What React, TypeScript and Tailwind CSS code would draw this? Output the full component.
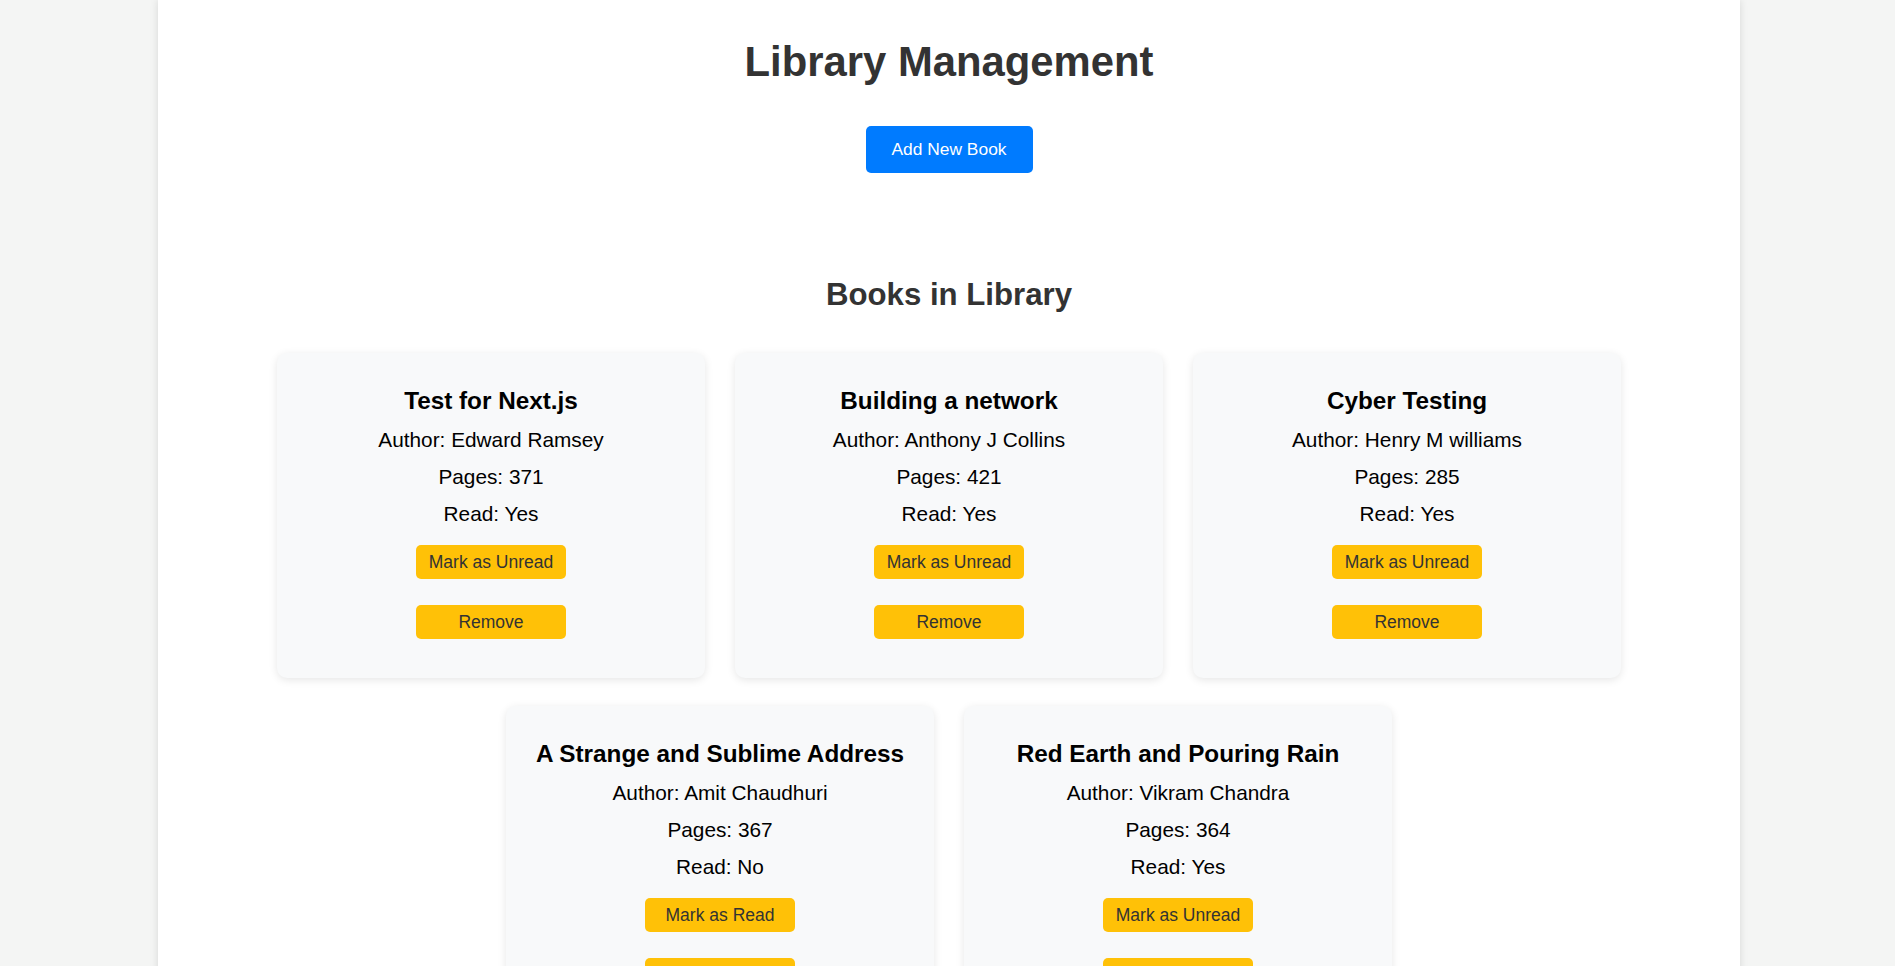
import React, { useState } from "react";

interface Book {
  id: number;
  title: string;
  author: string;
  pages: number;
  read: boolean;
}

const initialBooks: Book[] = [
  { id: 1, title: "Test for Next.js", author: "Edward Ramsey", pages: 371, read: true },
  { id: 2, title: "Building a network", author: "Anthony J Collins", pages: 421, read: true },
  { id: 3, title: "Cyber Testing", author: "Henry M williams", pages: 285, read: true },
  { id: 4, title: "A Strange and Sublime Address", author: "Amit Chaudhuri", pages: 367, read: false },
  { id: 5, title: "Red Earth and Pouring Rain", author: "Vikram Chandra", pages: 364, read: true },
];

const BookCard = ({
  book,
  onToggle,
  onRemove,
}: {
  book: Book;
  onToggle: () => void;
  onRemove: () => void;
}) => {
  return (
    <div className="flex w-[428px] flex-col items-center rounded-[10px] bg-[#f8f9fa] pt-[35px] pb-[39px] text-center shadow-[0_2px_8px_rgba(0,0,0,0.1)]">
      <h3 className="text-[24.3px] font-bold leading-[26px] text-black">{book.title}</h3>
      <p className="mt-[15px] text-[20.8px] leading-[22px] text-black">Author: {book.author}</p>
      <p className="mt-[15px] text-[20.8px] leading-[22px] text-black">Pages: {book.pages}</p>
      <p className="mt-[15px] text-[20.8px] leading-[22px] text-black">Read: {book.read ? "Yes" : "No"}</p>
      <button
        onClick={onToggle}
        className="mt-[20px] flex h-[34px] w-[150px] items-center justify-center rounded-[5px] bg-[#ffc107] text-[17.5px] text-[#333]"
      >
        {book.read ? "Mark as Unread" : "Mark as Read"}
      </button>
      <button
        onClick={onRemove}
        className="mt-[26px] flex h-[34px] w-[150px] items-center justify-center rounded-[5px] bg-[#ffc107] text-[17.5px] text-[#333]"
      >
        Remove
      </button>
    </div>
  );
};

export default function App() {
  const [books, setBooks] = useState<Book[]>(initialBooks);

  const toggleRead = (id: number) => {
    setBooks(books.map((b) => (b.id === id ? { ...b, read: !b.read } : b)));
  };

  const removeBook = (id: number) => {
    setBooks(books.filter((b) => b.id !== id));
  };

  return (
    <div className="flex min-h-screen justify-center bg-[#f4f5f4] pl-[3px] font-['Liberation_Sans',Arial,sans-serif]">
      <div className="flex min-h-screen w-[1582px] flex-col items-center bg-white pb-[40px] shadow-[0_0_8px_rgba(0,0,0,0.12)]">
        <h1 className="mt-[39px] text-[41.8px] font-bold leading-[45px] text-[#333]">Library Management</h1>
        <button className="mt-[42px] flex h-[47px] w-[167px] items-center justify-center rounded-[5px] bg-[#007bff] text-[17.4px] text-white">
          Add New Book
        </button>
        <h2 className="mt-[105px] text-[31.2px] font-bold leading-[34px] text-[#333]">Books in Library</h2>
        <div className="mt-[41px] flex w-full flex-wrap justify-center gap-x-[30px] gap-y-[28px] px-[100px]">
          {books.map((book) => (
            <BookCard
              key={book.id}
              book={book}
              onToggle={() => toggleRead(book.id)}
              onRemove={() => removeBook(book.id)}
            />
          ))}
        </div>
      </div>
    </div>
  );
}
